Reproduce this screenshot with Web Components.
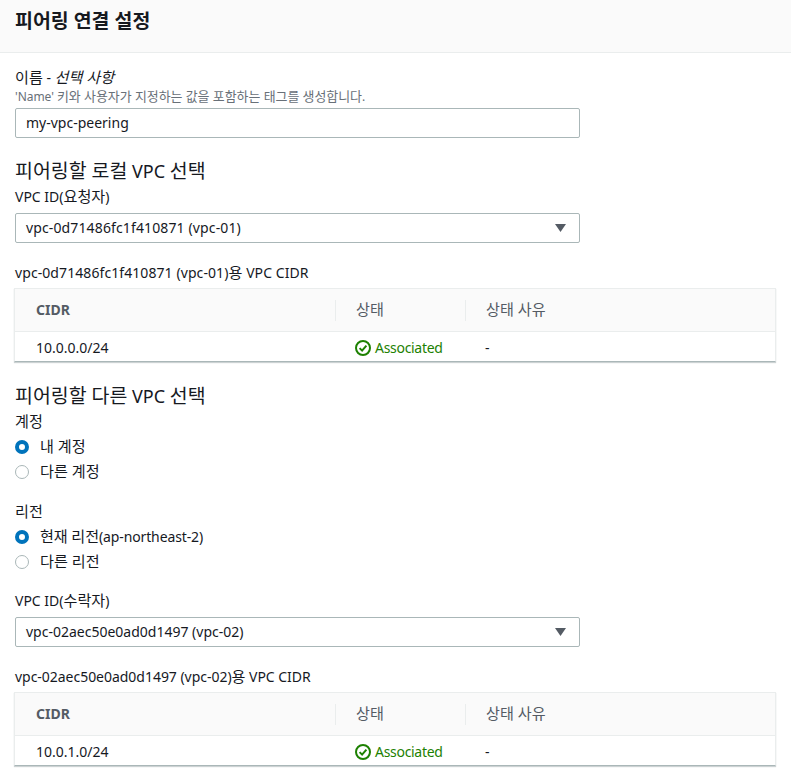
<!DOCTYPE html>
<html lang="ko">
<head>
<meta charset="utf-8">
<title>피어링 연결 설정</title>
<style>
  html, body { margin: 0; background: #fff; }
  body { font-family: "Noto Sans", "Noto Sans CJK KR", sans-serif; font-size: 14px; color: #16191f; overflow: hidden; height: 779px; }
</style>
</head>
<body>
<script>
const fontStack = `"Noto Sans", "Noto Sans CJK KR", sans-serif`;

const checkIcon = `<svg width="16" height="16" viewBox="0 0 16 16" fill="none" xmlns="http://www.w3.org/2000/svg">
<circle cx="8" cy="8" r="7" stroke="#1d8102" stroke-width="2"/>
<path d="M4.6 8.1L7.1 10.6L11.4 5.6" stroke="#1d8102" stroke-width="2"/>
</svg>`;

// the hangul in the reference is a little larger than Noto's, so runs of it get their own box
const ko = (text) => text.replace(/[\uAC00-\uD7A3]+(?: [\uAC00-\uD7A3]+)*/g, (m) => `<ko-run>${m}</ko-run>`);

class KoRun extends HTMLElement {
  connectedCallback() {
    this.attachShadow({ mode: "open" }).innerHTML = `<style>
      :host { display: inline; font-size: 1.08em; line-height: 1; }
    </style><slot></slot>`;
  }
}

class PanelHeader extends HTMLElement {
  connectedCallback() {
    this.attachShadow({ mode: "open" }).innerHTML = `<style>
      :host { display: block; height: 53px; box-sizing: border-box; background: #fafafa; border-bottom: 1px solid #eaeded; padding: 9px 15px 0; }
      h2 { margin: 0; font: 700 18px/24px ${fontStack}; color: #16191f; }
    </style><h2><slot></slot></h2>`;
  }
}

class SectionHeading extends HTMLElement {
  connectedCallback() {
    this.attachShadow({ mode: "open" }).innerHTML = `<style>
      :host { display: block; font: 400 18px/24px ${fontStack}; color: #16191f; }
    </style><slot></slot>`;
  }
}

class FieldLabel extends HTMLElement {
  connectedCallback() {
    this.attachShadow({ mode: "open" }).innerHTML = `<style>
      :host { display: block; font: 400 14px/20px ${fontStack}; color: #16191f; }
      ::slotted(i) { font-style: italic; }
    </style><slot></slot>`;
  }
}

class FieldHint extends HTMLElement {
  connectedCallback() {
    this.attachShadow({ mode: "open" }).innerHTML = `<style>
      :host { display: block; font: 400 12px/16px ${fontStack}; color: #687078; letter-spacing: -0.04px; }
    </style><slot></slot>`;
  }
}

class TextBox extends HTMLElement {
  connectedCallback() {
    const arrow = this.hasAttribute("select")
      ? `<svg width="11" height="8" viewBox="0 0 11 8" xmlns="http://www.w3.org/2000/svg"><path d="M0 0H11L5.5 8Z" fill="#545b64"/></svg>`
      : "";
    this.attachShadow({ mode: "open" }).innerHTML = `<style>
      :host { display: flex; align-items: center; justify-content: space-between; box-sizing: border-box; width: 565px; height: 30px; padding: 0 13px 0 10px; background: #fff; border: 1px solid #aab7b8; border-radius: 2px; font: 400 14px/20px ${fontStack}; color: #16191f; }
    </style><span><slot></slot></span>${arrow}`;
  }
}

class RadioOption extends HTMLElement {
  connectedCallback() {
    const on = this.hasAttribute("checked");
    this.attachShadow({ mode: "open" }).innerHTML = `<style>
      :host { display: flex; align-items: center; gap: 11px; height: 25px; font: 400 14px/20px ${fontStack}; color: #16191f; }
      .dot { width: 14px; height: 14px; box-sizing: border-box; border-radius: 50%; background: #fff; flex: none; }
      .on { border: 4px solid #0073bb; }
      .off { border: 1px solid #aab7b8; }
    </style><span class="dot ${on ? "on" : "off"}"></span><span><slot></slot></span>`;
  }
}

class CidrTable extends HTMLElement {
  connectedCallback() {
    const cidr = this.getAttribute("cidr");
    this.attachShadow({ mode: "open" }).innerHTML = `<style>
      :host { display: block; margin-left: 14px; width: 762px; box-sizing: border-box; background: #fff; border: 1px solid #eaeded; border-bottom: 1px solid #aab7b8; box-shadow: 0 1px 1px 0 rgba(0,28,36,.2); font: 400 14px/20px ${fontStack}; }
      .row { display: grid; grid-template-columns: 320px 130px 1fr; align-items: center; }
      .head { height: 42px; background: #fafafa; border-bottom: 1px solid #eaeded; color: #545b64; }
      .body { height: 29px; box-sizing: border-box; padding-top: 2px; color: #16191f; }
      .cell { padding-left: 21px; }
      .head .cell { height: 21px; line-height: 20px; }
      .head .cell + .cell { border-left: 1px solid #eaeded; padding-left: 20px; }
      .cidr { font-weight: 700; }
      .body .cell + .cell { padding-left: 20px; }
      .body .ok { display: flex; align-items: center; gap: 4px; color: #1d8102; padding-left: 19px; letter-spacing: -0.3px; }
      svg { display: block; }
    </style>
    <div class="row head"><div class="cell cidr">CIDR</div><div class="cell">${ko("상태")}</div><div class="cell">${ko("상태 사유")}</div></div>
    <div class="row body"><div class="cell">${cidr}</div><div class="cell ok">${checkIcon}<span>Associated</span></div><div class="cell">-</div></div>`;
  }
}

class PeeringForm extends HTMLElement {
  connectedCallback() {
    this.attachShadow({ mode: "open" }).innerHTML = `<style>
      :host { display: block; }
      .pad { padding: 0 15px; }
      .top { padding-top: 15px; }
      field-hint { margin-top: 1px; }
      text-box { margin-top: 3px; }
      section-heading { margin-top: 21px; }
      .sub { margin-top: 4px; }
      text-box.sel { margin-top: 6px; }
      .cap { margin-top: 20px; margin-bottom: 5px; }
      .after { margin-top: 22px; }
      .radios { margin-top: 2px; }
      .gap { margin-top: 18px; }
      .gap2 { margin-top: 17px; }
      .wide { letter-spacing: 0.13px; }
      .wide2 { letter-spacing: 0.08px; }
      .tight { letter-spacing: -0.12px; }
      .tight2 { letter-spacing: -0.03px; }
    </style>` + ko(`
    <panel-header>피어링 연결 설정</panel-header>
    <div class="pad top">
      <field-label>이름 - <i>선택 사항</i></field-label>
      <field-hint>'Name' 키와 사용자가 지정하는 값을 포함하는 태그를 생성합니다.</field-hint>
      <text-box>my-vpc-peering</text-box>
      <section-heading>피어링할 로컬 VPC 선택</section-heading>
      <field-label class="sub">VPC ID(요청자)</field-label>
      <text-box class="sel wide" select>vpc-0d71486fc1f410871 (vpc-01)</text-box>
      <field-label class="cap wide2">vpc-0d71486fc1f410871 (vpc-01)용 VPC CIDR</field-label>
    </div>
    <cidr-table cidr="10.0.0.0/24"></cidr-table>
    <div class="pad">
      <section-heading class="after">피어링할 다른 VPC 선택</section-heading>
      <field-label class="sub">계정</field-label>
      <div class="radios">
        <radio-option checked>내 계정</radio-option>
        <radio-option>다른 계정</radio-option>
      </div>
      <field-label class="gap">리전</field-label>
      <div class="radios">
        <radio-option checked class="tight">현재 리전(ap-northeast-2)</radio-option>
        <radio-option>다른 리전</radio-option>
      </div>
      <field-label class="gap2">VPC ID(수락자)</field-label>
      <text-box class="sel" select>vpc-02aec50e0ad0d1497 (vpc-02)</text-box>
      <field-label class="cap tight2">vpc-02aec50e0ad0d1497 (vpc-02)용 VPC CIDR</field-label>
    </div>
    <cidr-table cidr="10.0.1.0/24"></cidr-table>`);
  }
}

customElements.define("ko-run", KoRun);
customElements.define("panel-header", PanelHeader);
customElements.define("section-heading", SectionHeading);
customElements.define("field-label", FieldLabel);
customElements.define("field-hint", FieldHint);
customElements.define("text-box", TextBox);
customElements.define("radio-option", RadioOption);
customElements.define("cidr-table", CidrTable);
customElements.define("peering-form", PeeringForm);

document.body.appendChild(document.createElement("peering-form"));
</script>
</body>
</html>
